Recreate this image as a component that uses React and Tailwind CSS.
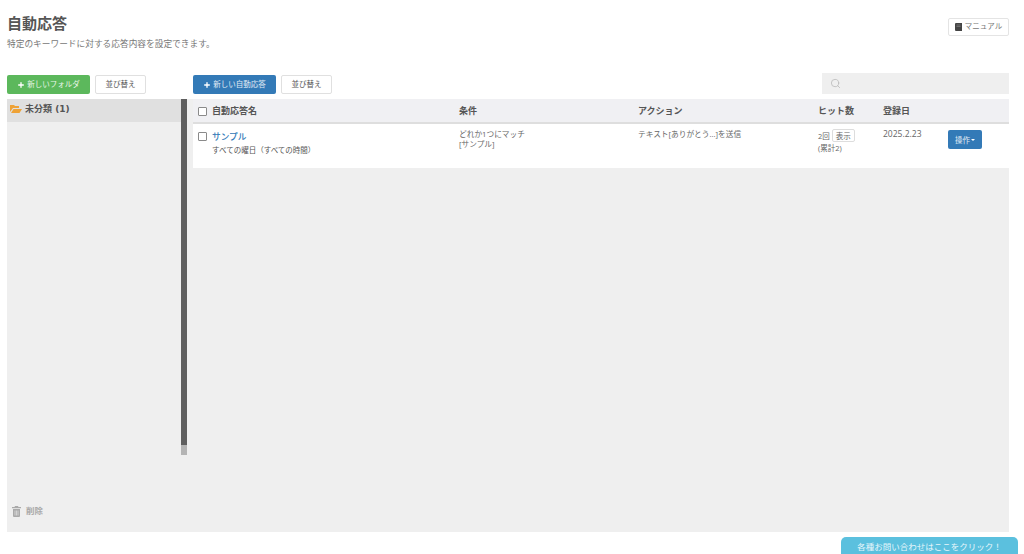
import React from "react";
import { Plus, Search } from "lucide-react";

function Btn({ children, className = "" }) {
  return <button className={`h-[19px] flex items-center justify-center rounded-[2px] text-[7.5px] leading-none ${className}`}>{children}</button>;
}

function Check() {
  return <span className="block w-[9px] h-[9px] rounded-[1px] border border-[#8a8a8a] bg-white shrink-0" />;
}

export default function App() {
  return (
    <div className="relative h-[554px] w-[1024px] overflow-hidden bg-white pl-[7px] pr-[15px] text-[#555] font-['Open_Sans','Noto_Sans_CJK_JP',sans-serif]">
      <header className="flex items-start justify-between h-[75px]">
        <div className="pt-[14px]">
          <h1 className="text-[15px] leading-[18px] font-bold text-[#555]">自動応答</h1>
          <p className="mt-[6px] text-[8.7px] leading-[12px] text-[#777]">特定のキーワードに対する応答内容を設定できます。</p>
        </div>
        <button className="mt-[18px] h-[18px] w-[61px] flex items-center justify-center gap-[3px] rounded-[2px] border border-[#e4e4e4] bg-white text-[7.5px] text-[#777]">
          <svg width="7" height="8" viewBox="0 0 7 8"><path d="M0 1a1 1 0 0 1 1-1h6v8H1a1 1 0 0 1-1-1z" fill="#444" /><path d="M1.5 2h4M1.5 3.5h4" stroke="#999" strokeWidth=".5" /></svg>
          マニュアル
        </button>
      </header>

      <div className="flex h-[24px]">
        <div className="flex w-[186px] gap-[5px]">
          <Btn className="w-[83px] bg-[#5cb85c] text-[#e8f5e8] gap-[2px]"><Plus size={8} strokeWidth={4} className="text-white" />新しいフォルダ</Btn>
          <Btn className="w-[51px] border border-[#e0e0e0] bg-white text-[#555]">並び替え</Btn>
        </div>
        <div className="flex gap-[5px]">
          <Btn className="w-[83px] bg-[#337ab7] text-[#e0ebf5] gap-[2px]"><Plus size={8} strokeWidth={4} className="text-white" />新しい自動応答</Btn>
          <Btn className="w-[51px] border border-[#e0e0e0] bg-white text-[#555]">並び替え</Btn>
        </div>
        <div className="ml-auto -mt-[2px] flex h-[21px] w-[187px] items-center bg-[#efefef] pl-[8px] text-[#c0c0c0]">
          <Search size={11} strokeWidth={2} />
        </div>
      </div>

      <main className="flex h-[433px] bg-[#efefef]">
        <aside className="relative flex w-[180px] shrink-0 flex-col">
          <div className="flex h-[23px] w-[174px] items-start gap-[3px] bg-[#e0e0e0] pl-[3px] pt-[4px] text-[9px] font-bold leading-[13px] text-[#555]">
            <svg width="12" height="10" viewBox="0 0 12 10" className="mt-[1px]"><path d="M0 8V1h4l1 1h4v2H3L0 8zm1 1 2.5-4H12L9.5 9H1z" fill="#eea236" /></svg>
            <span className="font-['DejaVu_Sans','Noto_Sans_CJK_JP',sans-serif]">未分類 (1)</span>
          </div>
          <div className="absolute left-[174px] top-0 h-[356px] w-[6px] bg-[#b4b4b4]">
            <div className="h-[346px] w-full bg-[#5f5f5f]" />
          </div>
          <div className="mt-auto mb-[14px] flex items-center gap-[5px] pl-[5px] text-[8.5px] font-bold text-[#aaa]">
            <svg width="9" height="11" viewBox="0 0 9 11"><path d="M3 0h3l.5 1H9v1.2H0V1h2.500zM1 3h7v7a1 1 0 0 1-1 1H2a1 1 0 0 1-1-1z" fill="#aaa" /><path d="M3 4.500v5M4.500 4.500v5M6 4.500v5" stroke="#efefef" strokeWidth=".6" /></svg>
            削除
          </div>
        </aside>

        <section className="ml-[6px] flex-1">
          <div className="flex h-[25px] items-center border-b-2 border-[#dedede] bg-[#f0f0f3] pt-[1px] text-[9px] font-bold text-[#555]">
            <div className="flex w-[266px] items-center gap-[5px] pl-[5px]"><Check />自動応答名</div>
            <div className="w-[179px]">条件</div>
            <div className="w-[180px]">アクション</div>
            <div className="w-[65px]">ヒット数</div>
            <div>登録日</div>
          </div>
          <div className="flex h-[44px] items-start bg-white text-[7.5px] leading-[10px] text-[#666]">
            <div className="flex w-[266px] gap-[5px] pl-[5px] pt-[7px]">
              <span className="mt-[1px]"><Check /></span>
              <div>
                <div className="text-[8.7px] leading-[12px] font-medium text-[#337ab7]">サンプル</div>
                <div className="mt-[2px] leading-[11px] text-[#555]">すべての曜日（すべての時間）</div>
              </div>
            </div>
            <div className="w-[179px] pt-[5px] text-[7.7px]">どれか1つにマッチ<br />[サンプル]</div>
            <div className="w-[180px] pt-[5px] text-[7.7px]">テキスト[ありがとう...]を送信</div>
            <div className="w-[65px] pt-[5px]">
              <div className="flex items-center gap-[2px]">2回<span className="flex h-[13px] w-[23px] items-center justify-center rounded-[2px] border border-[#ddd]">表示</span></div>
              <div className="mt-[1px]">(累計2)</div>
            </div>
            <div className="w-[65px] pt-[5px] text-[8.5px]">2025.2.23</div>
            <div className="pt-[6px]"><button className="flex h-[19px] w-[34px] items-center justify-center rounded-[2px] bg-[#337ab7] text-[7.5px] text-[#e0ebf5]">操作<span className="ml-[1px] border-x-[2px] border-t-[2px] border-x-transparent border-t-white" /></button></div>
          </div>
        </section>
      </main>

      <button className="absolute left-[841px] top-[537px] h-[24px] w-[177px] rounded-t-[5px] bg-[#5bc0de] pb-[3px] text-[8.5px] text-[#e6f6fb]">各種お問い合わせはここをクリック！</button>
    </div>
  );
}
